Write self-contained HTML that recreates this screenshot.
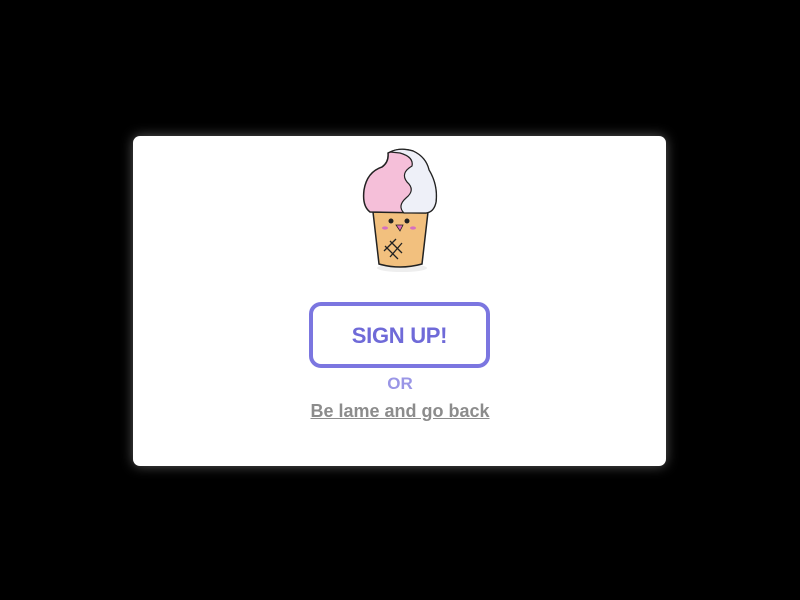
<!DOCTYPE html>
<html><head><style>
html,body{margin:0;padding:0;background:#000;width:800px;height:600px;overflow:hidden;font-family:"Liberation Sans",sans-serif}
.card{position:absolute;left:133px;top:136px;width:533px;height:330px;background:#fff;border-radius:7px;box-shadow:0 0 12px rgba(255,255,255,0.35)}
.btn{position:absolute;left:309px;top:302px;width:173px;height:58px;border:4px solid #7b76e0;border-radius:12px;color:#6f6ad8;font-weight:bold;font-size:22px;text-align:center;line-height:60px;letter-spacing:-0.3px}
.or{position:absolute;left:0;width:800px;top:374px;text-align:center;color:#9a96e6;font-weight:bold;font-size:17px}
.link{position:absolute;left:0;width:800px;top:401px;text-align:center;color:#8c8c8c;font-weight:bold;font-size:18px;text-decoration:underline}
svg{position:absolute;left:340px;top:140px}
</style></head><body>
<div class="card"></div>
<svg width="120" height="135" viewBox="0 0 120 135">
<ellipse cx="62" cy="128" rx="25" ry="4" fill="#eee"/>
<path d="M33 72 L88 72 L82 124 Q60 130 39 124 Z" fill="#f2c07e" stroke="#222" stroke-width="1.5"/>
<path d="M30 72 Q22 66 24 50 Q27 32 42 27 Q49 22 48 13 Q60 7 73 11 Q86 17 89 30 Q98 45 96 62 Q94 72 86 73 Z" fill="#f5bfd9" stroke="#222" stroke-width="1.5"/>
<path d="M50 12 Q60 7 73 11 Q86 17 89 30 Q98 45 96 62 Q94 72 86 73 L64 73 Q57 66 66 58 Q76 50 67 42 Q60 33 72 26 Q74 17 60 13 Z" fill="#eef0f8" stroke="#222" stroke-width="1.2"/>
<circle cx="51" cy="81" r="2.5" fill="#222"/><circle cx="67" cy="81" r="2.5" fill="#222"/>
<ellipse cx="45" cy="88" rx="3" ry="1.6" fill="#d66fc0"/><ellipse cx="73" cy="88" rx="3" ry="1.6" fill="#d66fc0"/>
<path d="M56 85 L63 85 L60 91 Z" fill="#e06ab8" stroke="#222" stroke-width="0.8"/>
<path d="M45 106 L58 119 M50 101 L62 113 M50 117 L62 103 M44 111 L56 99" stroke="#222" stroke-width="1.3" fill="none"/>
</svg>
<div class="btn">SIGN UP!</div>
<div class="or">OR</div>
<div class="link">Be lame and go back</div>
</body></html>
